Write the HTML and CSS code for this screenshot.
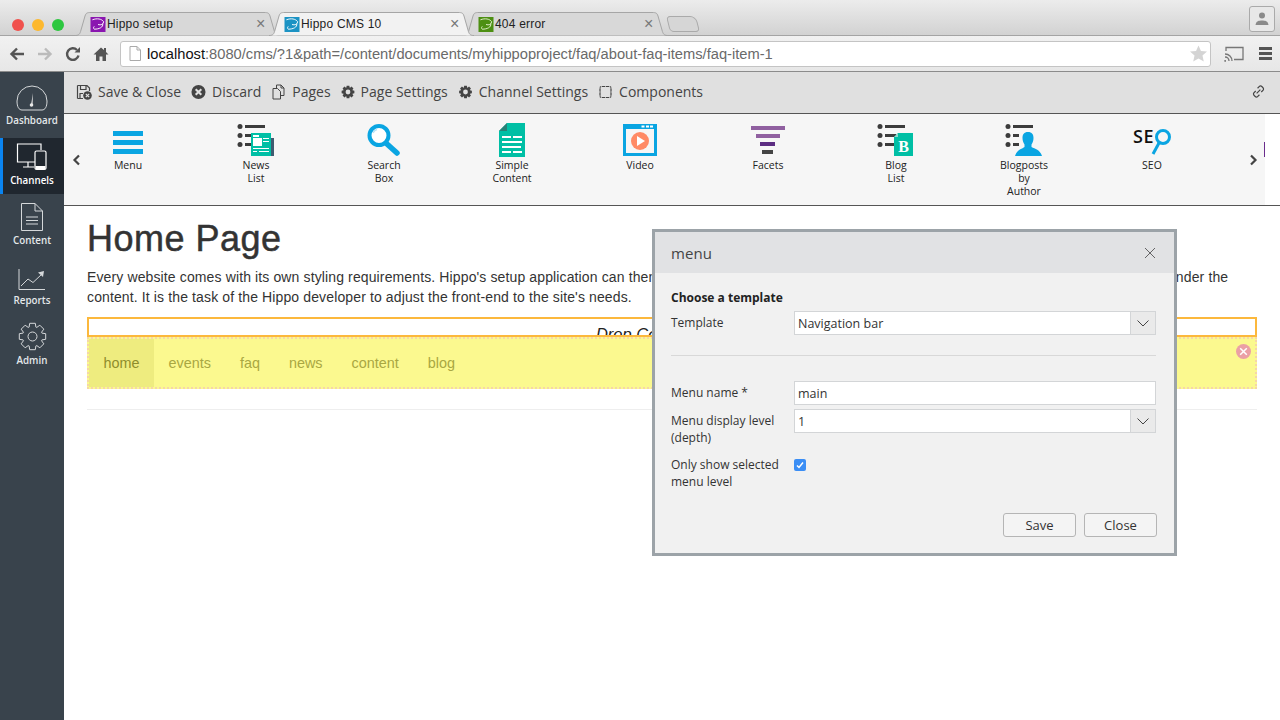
FILE: index.html
```html
<!DOCTYPE html>
<html lang="en">
<head>
    <meta charset="UTF-8">
    <title>Hippo CMS 10</title>
    <link rel="stylesheet" href="styles.css">
</head>
<body>
    <div class="tabstrip">
        <div class="traffic">
            <span class="light red"></span>
            <span class="light yellow"></span>
            <span class="light green"></span>
        </div>
        <div class="tabs">
            <div class="tab">
                <svg class="tab-shape" viewBox="0 0 205 24"><path d="M0 23.5C4 23.5 5 22 6 18L10 4C11 1 12 .5 16 .5H189C193 .5 194 1 195 4L199 18C200 22 201 23.5 205 23.5" fill="#d8d8d8" stroke="#a6a6a6"/></svg>
                <svg class="favicon" viewBox="0 0 16 16"><rect width="16" height="16" fill="#8a16b0"/><path d="M2 3C7 1 12 2 14 5C14 8 11 9 8 8M13 7C14 11 9 13 4 13C3 12 3 11 4 10" fill="none" stroke="#fff"/></svg>
                <span class="tab-title">Hippo setup</span>
                <span class="tab-close">&#215;</span>
            </div>
            <div class="tab tab-active">
                <svg class="tab-shape" viewBox="0 0 205 24"><path d="M0 23.5C4 23.5 5 22 6 18L10 4C11 1 12 .5 16 .5H189C193 .5 194 1 195 4L199 18C200 22 201 23.5 205 23.5" fill="#f2f2f2" stroke="#a6a6a6"/></svg>
                <svg class="favicon" viewBox="0 0 16 16"><rect width="16" height="16" fill="#1c93c4"/><path d="M2 3C7 1 12 2 14 5C14 8 11 9 8 8M13 7C14 11 9 13 4 13C3 12 3 11 4 10" fill="none" stroke="#fff"/></svg>
                <span class="tab-title">Hippo CMS 10</span>
                <span class="tab-close">&#215;</span>
            </div>
            <div class="tab">
                <svg class="tab-shape" viewBox="0 0 205 24"><path d="M0 23.5C4 23.5 5 22 6 18L10 4C11 1 12 .5 16 .5H189C193 .5 194 1 195 4L199 18C200 22 201 23.5 205 23.5" fill="#d8d8d8" stroke="#a6a6a6"/></svg>
                <svg class="favicon" viewBox="0 0 16 16"><rect width="16" height="16" fill="#4d8f12"/><path d="M2 3C7 1 12 2 14 5C14 8 11 9 8 8M13 7C14 11 9 13 4 13C3 12 3 11 4 10" fill="none" stroke="#e4f0d0"/></svg>
                <span class="tab-title">404 error</span>
                <span class="tab-close">&#215;</span>
            </div>
            <div class="newtab"></div>
        </div>
        <div class="profile">
            <svg viewBox="0 0 16 16" width="16" height="16"><circle cx="8" cy="4.5" r="3" fill="#8a8a8a"/><path d="M1.500 14C2 10 5 9.500 8 9.500S14 10 14.500 14Z" fill="#8a8a8a"/></svg>
        </div>
    </div>

    <div class="addressbar">
        <svg class="navicon" viewBox="0 0 16 16"><path d="M15 8H3M8 2.500L2.500 8L8 13.500" fill="none" stroke="#555" stroke-width="2.400"/></svg>
        <svg class="navicon" viewBox="0 0 16 16"><path d="M1 8H13M8 2.500L13.500 8L8 13.500" fill="none" stroke="#bbb" stroke-width="2.400"/></svg>
        <svg class="navicon" viewBox="0 0 16 16"><path d="M13.500 9.500A5.800 5.800 0 1 1 12 4" fill="none" stroke="#555" stroke-width="2.400"/><path d="M9.500 6.500H15V1Z" fill="#555"/></svg>
        <svg class="navicon" viewBox="0 0 16 16"><path d="M8 1.500L0.500 8.500H3V15H6.500V10.500H9.500V15H13V8.500H15.500L13 6V2H11V4Z" fill="#555"/></svg>
        <div class="omnibox">
            <svg class="pageicon" viewBox="0 0 12 15"><path d="M1 .5H8L11.500 4V14.500H1Z M8 .5V4H11.500" fill="#fff" stroke="#aaa"/></svg>
            <span class="url"><b>localhost</b>:8080/cms/?1&amp;path=/content/documents/myhippoproject/faq/about-faq-items/faq-item-1</span>
            <svg class="star" viewBox="0 0 18 18"><path d="M9 .5L11.600 6.400L18 7L13.200 11.200L14.600 17.500L9 14.200L3.400 17.500L4.800 11.200L0 7L6.400 6.400Z" fill="#d4d4d4"/></svg>
        </div>
        <svg class="cast" viewBox="0 0 20 16"><path d="M2 5V1.500H19V13.500H10" fill="none" stroke="#777" stroke-width="1.300"/><path d="M1 8C5 8 8 11 8 15M1 11C3.500 11 5 13 5 15M1 14V15H2" fill="none" stroke="#777" stroke-width="1.300"/></svg>
        <div class="hamburger"><span></span><span></span><span></span></div>
    </div>

    <div class="app">
        <nav class="sidebar">
            <a class="side-item">
                <svg viewBox="0 0 32 26" width="32" height="26"><path d="M6 25H26C29 25 31 22 31 16A15 15 0 0 0 1 16C1 22 3 25 6 25Z" fill="none" stroke="#d5d8da"/><path d="M15 20L17 8L16.500 20Z" fill="#e8e8e8"/><circle cx="15.500" cy="20" r="1.800" fill="#e8e8e8"/></svg>
                <span>Dashboard</span>
            </a>
            <a class="side-item active">
                <svg viewBox="0 0 32 28" width="32" height="28"><path d="M19 19H1.500V1H25V7M12 19V24M7 24H18" fill="none" stroke="#fff" stroke-width="1.200"/><rect x="19" y="8" width="11" height="18.500" rx="1.500" fill="#20272f" stroke="#fff" stroke-width="1.200"/><rect x="19.500" y="23" width="10" height="3" fill="#fff"/></svg>
                <span>Channels</span>
            </a>
            <a class="side-item">
                <svg viewBox="0 0 24 28" width="24" height="28"><path d="M1.500 .5H15L22.500 8V27.500H1.500ZM15 .5V8H22.500M6 14H18M6 17.500H18M6 21H18" fill="none" stroke="#d5d8da"/></svg>
                <span>Content</span>
            </a>
            <a class="side-item">
                <svg viewBox="0 0 28 22" width="28" height="22"><path d="M1 0V20.500H27M3 17L10 10L15 13.500L24 5" fill="none" stroke="#d5d8da"/><path d="M20 3.500L26 2L25 8Z" fill="#d5d8da"/></svg>
                <span>Reports</span>
            </a>
            <a class="side-item">
                <svg viewBox="0 0 29 29" width="29" height="29"><path d="M23.900 11.100L27.700 11.700V17.300L23.900 17.900L23.550 18.740L25.800 21.850L21.850 25.800L18.740 23.550L17.900 23.900L17.300 27.700H11.700L11.100 23.900L10.260 23.550L7.150 25.800L3.200 21.850L5.450 18.740L5.100 17.900L1.300 17.300V11.700L5.100 11.100L5.450 10.260L3.200 7.150L7.150 3.200L10.260 5.450L11.100 5.100L11.700 1.300H17.300L17.900 5.100L18.740 5.450L21.850 3.200L25.800 7.150L23.550 10.260Z" fill="none" stroke="#d5d8da" stroke-linejoin="round"/><circle cx="14.500" cy="14.500" r="4.500" fill="none" stroke="#d5d8da"/></svg>
                <span>Admin</span>
            </a>
        </nav>

        <main class="main">
            <div class="toolbar">
                <a class="tool">
                    <svg viewBox="0 0 16 16" width="16" height="16"><path d="M1.500 1.500H11L13.500 4V7M7 14.500H1.500ZM1.500 1.500V14.500M4.500 1.500V5.500H10V1.500M4 14V9.500H7" fill="none" stroke="#444" stroke-width="1.200"/><circle cx="11.500" cy="11.500" r="4.300" fill="#444"/><path d="M9.800 9.800L13.200 13.200M13.200 9.800L9.800 13.200" stroke="#e0e0e0" stroke-width="1.200"/></svg>
                    Save &amp; Close
                </a>
                <a class="tool">
                    <svg viewBox="0 0 16 16" width="15" height="16"><circle cx="8" cy="8" r="7.500" fill="#444"/><path d="M5 5L11 11M11 5L5 11" stroke="#e0e0e0" stroke-width="2.200"/></svg>
                    Discard
                </a>
                <a class="tool">
                    <svg viewBox="0 0 14 16" width="15" height="16"><path d="M5 4V1H9.500L12.500 4V11.500H9M1.500 4.500H6L9 7.500V15H1.500ZM9.500 1V4H12.500" fill="none" stroke="#444"/></svg>
                    Pages
                </a>
                <a class="tool">
                    <svg viewBox="0 0 29 29" width="14" height="14"><path d="M23.900 11.100L27.700 11.700V17.300L23.900 17.900L23.550 18.740L25.800 21.850L21.850 25.800L18.740 23.550L17.900 23.900L17.300 27.700H11.700L11.100 23.900L10.260 23.550L7.150 25.800L3.200 21.850L5.450 18.740L5.100 17.900L1.300 17.300V11.700L5.100 11.100L5.450 10.260L3.200 7.150L7.150 3.200L10.260 5.450L11.100 5.100L11.700 1.300H17.300L17.900 5.100L18.740 5.450L21.850 3.200L25.800 7.150L23.550 10.260Z" fill="#444"/><circle cx="14.500" cy="14.500" r="5" fill="#e0e0e0"/></svg>
                    Page Settings
                </a>
                <a class="tool">
                    <svg viewBox="0 0 29 29" width="15" height="14"><path d="M23.900 11.100L27.700 11.700V17.300L23.900 17.900L23.550 18.740L25.800 21.850L21.850 25.800L18.740 23.550L17.900 23.900L17.300 27.700H11.700L11.100 23.900L10.260 23.550L7.150 25.800L3.200 21.850L5.450 18.740L5.100 17.900L1.300 17.300V11.700L5.100 11.100L5.450 10.260L3.200 7.150L7.150 3.200L10.260 5.450L11.100 5.100L11.700 1.300H17.300L17.900 5.100L18.740 5.450L21.850 3.200L25.800 7.150L23.550 10.260Z" fill="#444"/><circle cx="14.500" cy="14.500" r="5" fill="#e0e0e0"/></svg>
                    Channel Settings
                </a>
                <a class="tool">
                    <svg viewBox="0 0 14 14" width="15" height="14"><rect x="1.500" y="1.500" width="11" height="11" rx="1.500" fill="none" stroke="#444" stroke-width="1.200"/><path d="M3 .5V2M7 .5V2M11 .5V2M3 12V13.500M7 12V13.500M11 12V13.500M.5 3H2M.5 7H2M.5 11H2M12 3H13.500M12 7H13.500M12 11H13.500" stroke="#e0e0e0" stroke-width=".7"/></svg>
                    Components
                </a>
                <svg class="tool-link" viewBox="0 0 14 14" width="13" height="13"><path d="M6 3.500L8 1.500C9.500 0 13.500 3.500 12 5.500L10 7.500M8 10.500L6 12.500C4.500 14 .5 10.500 2 8.500L4 6.500M5 9L9 5" fill="none" stroke="#444" stroke-width="1.300"/></svg>
            </div>

            <div class="carousel-wrap">
                <div class="carousel">
                    <svg class="arrow arrow-left" viewBox="0 0 9 12"><path d="M7 1.500L2.500 6L7 10.500" fill="none" stroke="#444" stroke-width="2.200"/></svg>
                    <div class="comp">
                        <svg class="comp-icon" viewBox="0 0 40 36"><path d="M5 8H35V13H5ZM5 17H35V22H5ZM5 26H35V31H5Z" fill="#0aa5e2"/></svg>
                        <span>Menu</span>
                    </div>
                    <div class="comp">
                        <svg class="comp-icon" viewBox="0 0 40 36"><circle cx="4" cy="3.500" r="2.500" fill="#3c3c3c"/><circle cx="4" cy="12.500" r="2.500" fill="#3c3c3c"/><circle cx="4" cy="21.500" r="2.500" fill="#3c3c3c"/><path d="M9 2H29V5H9ZM9 11H15V14H9ZM9 20H15V23H9Z" fill="#3c3c3c"/><rect x="35" y="15" width="3" height="18" fill="#3f5b70"/><rect x="15" y="10" width="20" height="23" fill="#00bfa5"/><path d="M17 12H23V14H17ZM17 15H26V23H17ZM27 15H33V16H27ZM27 18H33V19H27ZM17 25H33V26H17ZM17 28H21V29H17ZM23 28H33V29H23Z" fill="#fff"/></svg>
                        <span>News<br>List</span>
                    </div>
                    <div class="comp">
                        <svg class="comp-icon" viewBox="0 0 40 36"><circle cx="15" cy="12.500" r="9.500" fill="#fff" stroke="#0aa5e2" stroke-width="4"/><path d="M23 21L33 30" stroke="#0aa5e2" stroke-width="5.500" stroke-linecap="round"/><path d="M9 10C10 8 11 7 13 6.500" fill="none" stroke="#b7e3f6" stroke-width="1.500"/></svg>
                        <span>Search<br>Box</span>
                    </div>
                    <div class="comp">
                        <svg class="comp-icon" viewBox="0 0 40 36"><path d="M15 0H33V34H7V8Z" fill="#00bfa5"/><path d="M15 0V8H7Z" fill="#2a7f76"/><path d="M10 13H19V15H10ZM21 13H30V15H21ZM10 18H30V20H10ZM10 23H29V25H10ZM10 28H19V30H10ZM21 28H30V30H21Z" fill="#fff"/></svg>
                        <span>Simple<br>Content</span>
                    </div>
                    <div class="comp">
                        <svg class="comp-icon" viewBox="0 0 40 36"><rect x="3" y="1" width="34" height="32" fill="#0aa5e2"/><rect x="6" y="6" width="28" height="24" fill="#f6f6f6"/><path d="M26 2.500H29V4.500H26ZM30 2.500H33V4.500H30ZM21.500 2.500H24.500V4.500H21.500Z" fill="#fff"/><circle cx="20" cy="18" r="9" fill="#ff8a65"/><path d="M17 13L25 18L17 23Z" fill="#fff"/></svg>
                        <span>Video</span>
                    </div>
                    <div class="comp">
                        <svg class="comp-icon" viewBox="0 0 40 36"><path d="M3 3H37V7H3ZM8 11H32V15H8Z" fill="#9060a0"/><rect x="12" y="19" width="15" height="4" fill="#5c2d82"/><rect x="14" y="27" width="11" height="4" fill="#444"/></svg>
                        <span>Facets</span>
                    </div>
                    <div class="comp">
                        <svg class="comp-icon" viewBox="0 0 40 36"><circle cx="4" cy="3.500" r="2.500" fill="#3c3c3c"/><circle cx="4" cy="12.500" r="2.500" fill="#3c3c3c"/><circle cx="4" cy="21.500" r="2.500" fill="#3c3c3c"/><path d="M9 2H29V5H9ZM9 11H20V14H9ZM9 20H18V23H9Z" fill="#3c3c3c"/><path d="M22 10H37V33H18V14Z" fill="#00bfa5"/><path d="M22 10V14H18Z" fill="#8fd8cc"/><text x="27.500" y="29" class="blog-b">B</text></svg>
                        <span>Blog<br>List</span>
                    </div>
                    <div class="comp comp-author">
                        <svg class="comp-icon" viewBox="0 0 40 36"><circle cx="4" cy="3.500" r="2.500" fill="#3c3c3c"/><circle cx="4" cy="12.500" r="2.500" fill="#3c3c3c"/><circle cx="4" cy="21.500" r="2.500" fill="#3c3c3c"/><path d="M9 2H29V5H9ZM9 11H15V14H9ZM9 20H15V23H9Z" fill="#3c3c3c"/><path d="M24 9C28 9 29.500 11.500 29.500 15C29.500 18 28.500 20 27.500 21.500V24C31 26 36 26.500 38 33H11C13 26.500 18 26 20.500 24V21.500C19.500 20 18.500 18 18.500 15C18.500 11.500 20 9 24 9Z" fill="#0aa5e2"/></svg>
                        <span>Blogposts<br>by<br>Author</span>
                    </div>
                    <div class="comp">
                        <svg class="comp-icon" viewBox="0 0 40 36"><text x="1" y="20" class="seo-text">SE</text><circle cx="31" cy="14" r="6.500" fill="none" stroke="#0aa5e2" stroke-width="3"/><path d="M27 20L21 31" stroke="#0aa5e2" stroke-width="3"/></svg>
                        <span>SEO</span>
                    </div>
                    <svg class="arrow arrow-right" viewBox="0 0 9 12"><path d="M2 1.500L6.500 6L2 10.500" fill="none" stroke="#444" stroke-width="2.200"/></svg>
                    <span class="next-peek"></span>
                </div>
            </div>

            <div class="page">
                <h1>Home Page</h1>
                <p>Every website comes with its own styling requirements. Hippo's setup application can then supply a default theme to the site, while the templates only use plain markup to render the content. It is the task of the Hippo developer to adjust the front-end to the site's needs.</p>
                <div class="drop-box"><em>Drop Container Here</em></div>
                <div class="menu-comp">
                    <a class="menu-link current">home</a>
                    <a class="menu-link">events</a>
                    <a class="menu-link">faq</a>
                    <a class="menu-link">news</a>
                    <a class="menu-link">content</a>
                    <a class="menu-link">blog</a>
                    <svg class="comp-remove" viewBox="0 0 15 15" width="15" height="15"><circle cx="7.500" cy="7.500" r="7.500" fill="#eba0a5"/><path d="M4.200 4.200L10.800 10.800M10.800 4.200L4.200 10.800" stroke="#fff" stroke-width="1.500"/></svg>
                </div>
                <hr>
            </div>

            <div class="dialog">
                <div class="dialog-head">
                    <span>menu</span>
                    <svg viewBox="0 0 10 10" width="10" height="10"><path d="M0 0L10 10M10 0L0 10" stroke="#444" stroke-width=".8"/></svg>
                </div>
                <div class="dialog-body">
                    <div class="form-title">Choose a template</div>
                    <div class="form-row">
                        <label>Template</label>
                        <div class="select"><span>Navigation bar</span><i><svg viewBox="0 0 12 7" width="12" height="7"><path d="M.5 .5L6 6L11.500 .5" fill="none" stroke="#444"/></svg></i></div>
                    </div>
                    <div class="form-sep"></div>
                    <div class="form-row">
                        <label>Menu name *</label>
                        <div class="select"><span>main</span></div>
                    </div>
                    <div class="form-row row-depth">
                        <label>Menu display level (depth)</label>
                        <div class="select"><span>1</span><i><svg viewBox="0 0 12 7" width="12" height="7"><path d="M.5 .5L6 6L11.500 .5" fill="none" stroke="#444"/></svg></i></div>
                    </div>
                    <div class="form-row">
                        <label>Only show selected menu level</label>
                        <span class="check"><svg viewBox="0 0 12 12" width="12" height="12"><path d="M3 6.500L5 8.500L9 3.500" fill="none" stroke="#fff" stroke-width="1.500"/></svg></span>
                    </div>
                    <div class="form-buttons">
                        <button type="button">Save</button>
                        <button type="button">Close</button>
                    </div>
                </div>
            </div>
        </main>
    </div>
</body>
</html>
```

FILE: styles.css
```css
* {
    box-sizing: border-box;
}

html, body {
    height: 720px;
    overflow: hidden;
}

body {
    margin: 0;
    background-color: white;
    font-family: "Open Sans", sans-serif;
    color: #333;
}

/* browser window */
.tabstrip {
    display: flex;
    height: 36px;
    padding-top: 12px;
    background: linear-gradient(#ececec, #d2d2d2);
    border-bottom: 1px solid #a4a4a4;
    position: relative;
}

.traffic {
    display: flex;
    gap: 8px;
    padding: 7px 0 0 12px;
    width: 75px;
}

.light {
    width: 12px;
    height: 12px;
    border-radius: 50%;
}

.red { background-color: #f0514d; }
.yellow { background-color: #fdb82e; }
.green { background-color: #2dc740; }

.tabs {
    display: flex;
    flex: 1;
}

.tab {
    position: relative;
    display: flex;
    align-items: center;
    width: 205px;
    height: 24px;
    margin-right: -11px;
    padding-left: 15px;
}

.tab-active {
    z-index: 2;
}

.tab-shape {
    position: absolute;
    top: 0;
    left: 0;
    width: 205px;
    height: 24px;
}

.favicon {
    position: relative;
    width: 16px;
    height: 15px;
}

.tab-title {
    position: relative;
    margin-left: 1px;
    font-family: "Liberation Sans", sans-serif;
    font-size: 12px;
    letter-spacing: .2px;
    color: #222;
}

.tab-close {
    position: absolute;
    left: 181px;
    top: 3px;
    font-family: "Liberation Sans", sans-serif;
    font-size: 16px;
    line-height: 18px;
    color: #777;
}

.newtab {
    width: 30px;
    height: 16px;
    margin: 4px 0 0 11px;
    border: 1px solid #aaa;
    border-radius: 4px 6px 4px 4px;
    background-color: #d6d6d6;
    transform: skewX(14deg);
}

.profile {
    position: absolute;
    top: 6px;
    right: 5px;
    display: flex;
    align-items: center;
    justify-content: center;
    width: 26px;
    height: 26px;
    border: 1px solid #aaa;
    border-radius: 3px;
    background-color: #e8e8e8;
}

.addressbar {
    display: flex;
    align-items: center;
    height: 36px;
    padding: 0 8px 0 9px;
    background: linear-gradient(#f1f1f1, #e7e7e7);
    border-bottom: 1px solid #8c8c8c;
}

.navicon {
    width: 16px;
    height: 16px;
    margin-right: 12px;
    flex: none;
}

.omnibox {
    display: flex;
    align-items: center;
    flex: 1;
    height: 26px;
    margin-left: -1px;
    padding: 0 3px 0 8px;
    background-color: white;
    border: 1px solid #c4c4c4;
    border-radius: 3px;
}

.pageicon {
    width: 12px;
    height: 15px;
    margin-right: 6px;
    flex: none;
}

.url {
    flex: 1;
    font-family: "Liberation Sans", sans-serif;
    font-size: 14.700px;
    color: #6a6a6a;
    white-space: nowrap;
}

.url b {
    font-weight: normal;
    color: #111;
}

.star {
    width: 17px;
    height: 17px;
}

.cast {
    width: 20px;
    height: 16px;
    margin: 0 15px 0 13px;
}

.hamburger {
    display: flex;
    flex-direction: column;
    gap: 2px;
    width: 13px;
}

.hamburger span {
    height: 3px;
    background-color: #555;
}

/* cms */
.app {
    display: flex;
    height: 648px;
}

.sidebar {
    width: 64px;
    flex: none;
    padding-top: 6px;
    background-color: #39434c;
}

.side-item {
    display: flex;
    flex-direction: column;
    align-items: center;
    justify-content: flex-end;
    height: 56px;
    margin-bottom: 4px;
    padding-bottom: 6px;
    gap: 3px;
    font-size: 9.800px;
    font-weight: 600;
    line-height: 14px;
    color: #e4e8ea;
}

.side-item.active {
    background-color: #20272f;
    border-left: 3px solid #0a84f0;
    padding-right: 3px;
    color: white;
}

.main {
    position: relative;
    flex: 1;
    min-width: 0;
}

.toolbar {
    display: flex;
    align-items: center;
    gap: 10px;
    height: 42px;
    padding: 0 15px 2px 12px;
    background-color: #e0e0e0;
    border-bottom: 1px solid #555;
}

.tool {
    display: flex;
    align-items: center;
    gap: 6px;
    font-size: 14px;
    color: #444;
    white-space: nowrap;
}

.tool-link {
    margin-left: auto;
}

.carousel-wrap {
    height: 92px;
    border-bottom: 1px solid #555;
}

.carousel {
    position: relative;
    display: flex;
    width: 1201px;
    height: 91px;
    background-color: #f6f6f6;
}

.comp {
    display: flex;
    flex-direction: column;
    align-items: center;
    width: 128px;
    padding-top: 9px;
    font-size: 10.500px;
    line-height: 13px;
    text-align: center;
    color: #222;
}

.comp-icon {
    width: 40px;
    height: 36px;
    margin-bottom: 0;
}

.arrow {
    position: absolute;
    top: 40px;
    width: 9px;
    height: 12px;
}

.arrow-left { left: 8px; }
.arrow-right { left: 1185px; }

.next-peek {
    position: absolute;
    left: 1200px;
    top: 28px;
    width: 1px;
    height: 15px;
    background-color: #6a2c8c;
}

.blog-b {
    font-family: "Liberation Serif", serif;
    font-size: 16px;
    font-weight: bold;
    text-anchor: middle;
    fill: white;
}

.seo-text {
    font-family: "Open Sans", sans-serif;
    font-size: 18px;
    font-weight: 600;
    letter-spacing: .5px;
    fill: #111;
}

/* page preview */
.page {
    padding: 0 23px;
    font-family: "Liberation Sans", sans-serif;
    color: #333;
}

.page h1 {
    margin: 13px 0 8px;
    font-size: 36px;
    font-weight: 500;
    line-height: 40px;
    letter-spacing: .5px;
    -webkit-text-stroke: .5px #333;
}

.page p {
    margin: 0 0 10px;
    font-size: 14px;
    line-height: 20px;
    letter-spacing: .125px;
}

.drop-box {
    height: 20px;
    padding-top: 5px;
    border: 2px solid #fcb83c;
    overflow: hidden;
    font-size: 16.500px;
    line-height: 20px;
    text-align: center;
    color: #222;
}

.menu-comp {
    position: relative;
    display: flex;
    height: 52px;
    background-color: #fbf98f;
    border: 2px dotted #f5d6a8;
}

.menu-link {
    padding: 0 14.500px;
    font-size: 14.400px;
    line-height: 48px;
    color: #a9a742;
}

.menu-link.current {
    background-color: #eeec7f;
    color: #8f8d2c;
}

.comp-remove {
    position: absolute;
    top: 5px;
    right: 4px;
}

.page hr {
    margin: 20px 0 0;
    border: 0;
    border-top: 1px solid #eee;
}

/* dialog */
.dialog {
    position: absolute;
    left: 588px;
    top: 157px;
    width: 525px;
    height: 327px;
    background-color: #f1f1f1;
    border: 3px solid #9ca3a8;
    font-size: 12px;
    color: #333;
}

.dialog-head {
    display: flex;
    align-items: center;
    justify-content: space-between;
    height: 41px;
    padding: 0 19px 0 16px;
    background-color: #e1e2e4;
    font-size: 15px;
    letter-spacing: .1px;
    color: #444;
}

.dialog-body {
    padding: 17px 18px 0 16px;
}

.form-title {
    margin-bottom: 5px;
    font-weight: 700;
    line-height: 16px;
    color: #222;
}

.form-row {
    display: flex;
    align-items: flex-start;
    margin-bottom: 4px;
}

.row-depth {
    margin-bottom: 7px;
}

.form-row label {
    width: 123px;
    padding-right: 12px;
    flex: none;
    line-height: 17px;
    padding-top: 3px;
}

.select {
    display: flex;
    justify-content: space-between;
    flex: 1;
    height: 24px;
    padding-left: 3px;
    background-color: white;
    border: 1px solid #d3d5d7;
    line-height: 23px;
    font-size: 12.500px;
}

.select i {
    display: flex;
    align-items: center;
    justify-content: center;
    width: 25px;
    background-color: #eaeaea;
    border-left: 1px solid #d3d5d7;
}

.form-sep {
    height: 1px;
    margin: 20px 0 25px;
    background-color: #d8d8d8;
}

.check {
    display: flex;
    width: 12px;
    height: 12px;
    margin-top: 6px;
    border-radius: 2px;
    background-color: #3b8ef5;
}

.form-buttons {
    display: flex;
    justify-content: flex-end;
    gap: 8px;
    margin: 23px -1px 0 0;
}

.form-buttons button {
    width: 73px;
    height: 24px;
    padding: 0;
    background-color: #f4f4f4;
    border: 1px solid #b5b5b5;
    border-radius: 3px;
    font-family: "Open Sans", sans-serif;
    font-size: 13px;
    color: #333;
}
```
